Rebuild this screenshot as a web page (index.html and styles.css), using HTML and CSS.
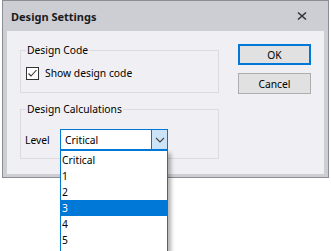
FILE: index.html
```html
<html>
    <head>
        <meta charset="utf-8">
        <title>Design Settings</title>
        <link rel="stylesheet" href="styles.css">
    </head>
    <body>
        <div class="window">
            <div class="titlebar">
                <span class="title">Design Settings</span>
                <svg class="close" width="10" height="10" viewBox="0 0 10 10">
                    <path d="M1 1.5 L9 8.5 M9 1.5 L1 8.5" stroke="#333" stroke-width="1.6" fill="none"/>
                </svg>
            </div>
            <div class="client">
                <div class="groups">
                    <fieldset class="group group-code">
                        <legend>Design Code</legend>
                        <label class="check">
                            <span class="box">
                                <svg width="11" height="11" viewBox="0 0 11 11">
                                    <path d="M1.5 5.5 L4 8 L9.5 2" stroke="#333" stroke-width="1.1" fill="none"/>
                                </svg>
                            </span>
                            Show design code
                        </label>
                    </fieldset>
                    <fieldset class="group group-calc">
                        <legend>Design Calculations</legend>
                        <div class="level-row">
                            <span class="level-label">Level</span>
                            <div class="combo">
                                <span class="combo-value">Critical</span>
                                <span class="combo-btn">
                                    <svg width="10" height="6" viewBox="0 0 10 6">
                                        <path d="M1 1 L5 5 L9 1" stroke="#444" stroke-width="1.1" fill="none"/>
                                    </svg>
                                </span>
                                <ul class="combo-list">
                                    <li>Critical</li>
                                    <li>1</li>
                                    <li>2</li>
                                    <li class="selected">3</li>
                                    <li>4</li>
                                    <li>5</li>
                                </ul>
                            </div>
                        </div>
                    </fieldset>
                </div>
                <div class="buttons">
                    <button class="btn btn-default" type="button">OK</button>
                    <button class="btn" type="button">Cancel</button>
                </div>
            </div>
        </div>
    </body>
</html>
```

FILE: styles.css
```css
html, body {
    overflow: hidden;
}

body {
    margin: 0;
    background-color: white;
    font-family: "Noto Sans", sans-serif;
    font-size: 10.3px;
    color: #000;
}

.window {
    box-sizing: border-box;
    width: 327px;
    margin-left: 2px;
    border: 1px solid #8c8c94;
    padding: 0 4px 3px 4px;
    background-color: #cdcdd4;
}

.titlebar {
    height: 30px;
    display: flex;
    align-items: center;
    padding-left: 4px;
}

.title {
    flex: 1;
    font-size: 11px;
    font-weight: bold;
    color: #1a1a1a;
    padding-top: 1px;
}

.close {
    margin-right: 17px;
}

.client {
    box-sizing: border-box;
    height: 143px;
    display: flex;
    padding: 12px 13px 0 13px;
    background-color: #f0f0f4;
}

.groups {
    width: 199px;
}

.group {
    box-sizing: border-box;
    margin: 0;
    border: 1px solid #dcdcdc;
    padding: 0 5px;
}

.group legend {
    padding: 0 1px;
    line-height: 14px;
}

.group-code {
    height: 50px;
}

.group-calc {
    height: 57px;
    margin-top: 9px;
}

.check {
    display: flex;
    align-items: center;
    margin-top: 9px;
}

.box {
    box-sizing: border-box;
    width: 13px;
    height: 13px;
    border: 1px solid #333;
    background-color: white;
    margin-right: 6px;
}

.box svg {
    display: block;
}

.level-row {
    display: flex;
    align-items: center;
    margin-top: 13px;
}

.level-label {
    width: 35px;
    margin-left: -1px;
}

.combo {
    position: relative;
    box-sizing: border-box;
    width: 108px;
    height: 21px;
    border: 1px solid #0078d7;
    background-color: white;
    display: flex;
    align-items: center;
}

.combo-value {
    flex: 1;
    padding-left: 4px;
}

.combo-btn {
    box-sizing: border-box;
    width: 16px;
    height: 19px;
    border-left: 1px solid #0078d7;
    background-color: #cce4f7;
    display: flex;
    align-items: center;
    justify-content: center;
}

.combo-btn svg {
    display: block;
}

.combo-list {
    position: absolute;
    left: -1px;
    top: 20px;
    box-sizing: border-box;
    width: 108px;
    margin: 0;
    padding: 1px 0 6px 0;
    list-style: none;
    border: 1px solid #0078d7;
    background-color: white;
    box-shadow: 3px 3px 4px rgba(0, 0, 0, 0.3);
}

.combo-list li {
    height: 16px;
    line-height: 16px;
    padding-left: 1px;
}

.combo-list .selected {
    background-color: #0078d7;
    color: white;
}

.buttons {
    display: flex;
    flex-direction: column;
    gap: 8px;
    margin-left: 19px;
    margin-top: 1px;
}

.btn {
    box-sizing: border-box;
    width: 73px;
    height: 21px;
    margin: 0;
    padding: 0;
    border: 1px solid #adadad;
    background-color: #e1e1e1;
    font-family: "Noto Sans", sans-serif;
    font-size: 10.3px;
    color: #000;
}

.btn-default {
    border: 2px solid #0078d7;
}
```
